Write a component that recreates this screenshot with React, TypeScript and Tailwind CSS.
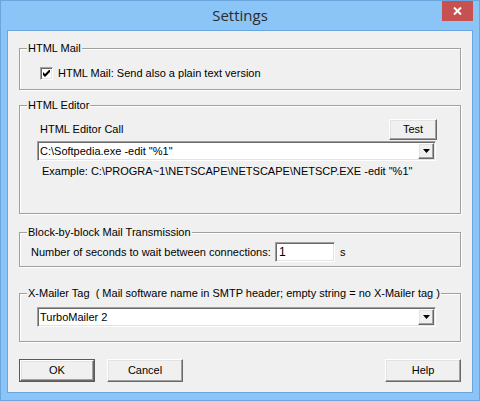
import type { ReactNode } from "react";

const raised =
  "border border-t-white border-l-white border-b-[#696969] border-r-[#696969] shadow-[inset_-1px_-1px_0_#a0a0a0,inset_1px_1px_0_#e3e3e3] bg-[#f0f0f0]";
const sunken =
  "border border-t-[#a0a0a0] border-l-[#a0a0a0] border-b-white border-r-white shadow-[inset_1px_1px_0_#696969,inset_-1px_-1px_0_#e3e3e3] bg-white";

function Group({ title, className, children }: { title: string; className: string; children?: ReactNode }) {
  return (
    <div className={`border border-[#a0a0a0] shadow-[inset_1px_1px_0_#fff,1px_1px_0_#fff] flex flex-col ${className}`}>
      <div className="-mt-[7px] ml-[7px] px-[1px] w-fit bg-[#f0f0f0] leading-[13px]">{title}</div>
      {children}
    </div>
  );
}

function Combo({ value }: { value: string }) {
  return (
    <div className={`${sunken} ml-[17px] w-[399px] h-[20px] flex items-center pl-[2px] pr-[1px]`}>
      <span className="flex-1 leading-[13px]">{value}</span>
      <div className={`${raised} w-[16px] h-[16px] flex items-center justify-center`}>
        <svg width="7" height="4" viewBox="0 0 7 4">
          <path d="M0 0h7L3.5 4z" fill="#000" />
        </svg>
      </div>
    </div>
  );
}

function Button({ label, isDefault, className = "" }: { label: string; isDefault?: boolean; className?: string }) {
  if (isDefault) {
    return (
      <div className={`border border-[#5a5a5a] w-[76px] h-[23px] flex ${className}`}>
        <div className={`${raised} flex-1 flex items-center justify-center`}>{label}</div>
      </div>
    );
  }
  return <div className={`${raised} w-[76px] h-[23px] flex items-center justify-center ${className}`}>{label}</div>;
}

export default function App() {
  return (
    <div className="w-[480px] h-[401px] bg-[#8bc4f7] border border-[#6ba5dd] flex flex-col text-[11px] text-black font-['Liberation_Sans',Arial,sans-serif]">
      {/* Title bar */}
      <div className="relative h-[29px] flex items-center justify-center">
        <span className="font-['Open_Sans',sans-serif] text-[15px] text-[#2b2b2b] leading-none -mt-[1px]">Settings</span>
        <div className="absolute top-0 right-[6px] w-[31px] h-[20px] bg-[#c75050] flex items-center justify-center">
          <svg width="9" height="8" viewBox="0 0 9 8">
            <path d="M1 0.5L8 7.5M8 0.5L1 7.5" stroke="#fff" strokeWidth="2" />
          </svg>
        </div>
      </div>

      {/* Client area */}
      <div className="mx-[6px] h-[363px] border border-[#6ba5dd] bg-[#f0f0f0] flex flex-col px-[11px] pt-[17px]">
        <Group title="HTML Mail" className="h-[42px]">
          <div className="mt-[12px] ml-[20px] flex items-center gap-[5px]">
            <div className={`${sunken} w-[13px] h-[13px] flex items-center justify-center`}>
              <svg width="7" height="7" viewBox="0 0 7 7">
                <path d="M0 2v3l2 2 5-5V-1L2 4z" fill="#000" />
              </svg>
            </div>
            <span className="leading-[13px]">HTML Mail: Send also a plain text version</span>
          </div>
        </Group>

        <Group title="HTML Editor" className="h-[109px] mt-[15px]">
          <div className="mt-[7px] pl-[20px] pr-[23px] flex items-center justify-between">
            <span className="leading-[13px]">HTML Editor Call</span>
            <div className={`${raised} w-[48px] h-[21px] flex items-center justify-center`}>Test</div>
          </div>
          <div className="mt-[1px]">
            <Combo value={'C:\\Softpedia.exe -edit "%1"'} />
          </div>
          <div className="mt-[4px] ml-[22px] leading-[13px]">
            Example: C:\PROGRA~1\NETSCAPE\NETSCAPE\NETSCP.EXE -edit "%1"
          </div>
        </Group>

        <Group title="Block-by-block Mail Transmission" className="h-[35px] mt-[18px]">
          <div className="mt-[3px] ml-[11px] flex items-center">
            <span className="w-[244px] leading-[13px]">Number of seconds to wait between connections:</span>
            <div className={`${sunken} w-[60px] h-[20px] flex items-center pl-[3px] text-[12px]`}>1</div>
            <span className="ml-[5px] leading-[13px]">s</span>
          </div>
        </Group>

        <Group
          title="X-Mailer Tag  ( Mail software name in SMTP header; empty string = no X-Mailer tag )"
          className="h-[49px] mt-[26px] whitespace-pre"
        >
          <div className="mt-[7px]">
            <Combo value="TurboMailer 2" />
          </div>
        </Group>

        <div className="mt-[17px] flex items-center">
          <Button label="OK" isDefault />
          <Button label="Cancel" className="ml-[12px]" />
          <Button label="Help" className="ml-auto" />
        </div>
      </div>
    </div>
  );
}
